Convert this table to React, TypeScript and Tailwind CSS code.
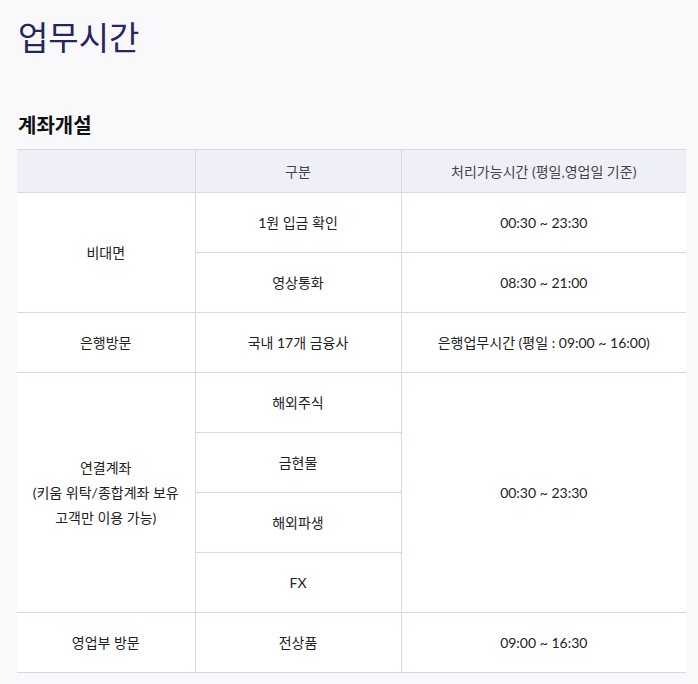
const rows = [
  { a: "비대면", b: "1원 입금 확인", c: "00:30 ~ 23:30", aSpan: 2 },
  { b: "영상통화", c: "08:30 ~ 21:00" },
  { a: "은행방문", b: "국내 17개 금융사", c: "은행업무시간 (평일 : 09:00 ~ 16:00)", aSpan: 1 },
  { a: "연결계좌\n(키움 위탁/종합계좌 보유\n고객만 이용 가능)", b: "해외주식", c: "00:30 ~ 23:30", aSpan: 4, cSpan: 4 },
  { b: "금현물" },
  { b: "해외파생" },
  { b: "FX" },
  { a: "영업부 방문", b: "전상품", c: "09:00 ~ 16:30", aSpan: 1 },
];

export default function App() {
  return (
    <div
      className="min-h-[684px] bg-[#f9f9fc] px-[17px] pt-[16px] pb-[12px] text-[#222]"
      style={{ fontFamily: "Lato, 'Noto Sans CJK KR', sans-serif" }}
    >
      <h1 className="text-[33px] leading-[42px] text-[#24265c] pl-[1px]">업무시간</h1>

      <h2 className="mt-[53px] text-[20px] leading-[28px] font-bold text-[#111] pl-[1px]">계좌개설</h2>

      <table className="mt-[10px] w-[669px] border-collapse table-fixed text-[14px] bg-white">
        <colgroup>
          <col className="w-[178px]" />
          <col className="w-[206px]" />
          <col />
        </colgroup>
        <thead>
          <tr className="h-[43px] bg-[#efeff8] text-[#444]">
            <th className="border-y border-[#d6d6ee] font-normal"></th>
            <th className="border border-[#d6d6ee] font-normal">구분</th>
            <th className="border-y border-[#d6d6ee] font-normal">처리가능시간 (평일,영업일 기준)</th>
          </tr>
        </thead>
        <tbody>
          {rows.map((r, i) => (
            <tr key={i} className="h-[60px]">
              {r.a && (
                <td
                  rowSpan={r.aSpan}
                  className="border-y border-r border-[#d6d6ee] text-center leading-[25px] whitespace-pre-line"
                >
                  {r.a}
                </td>
              )}
              <td className="border border-[#d6d6ee] text-center">{r.b}</td>
              {r.c && (
                <td rowSpan={r.cSpan ?? 1} className="border-y border-l border-[#d6d6ee] text-center">
                  {r.c}
                </td>
              )}
            </tr>
          ))}
        </tbody>
      </table>
    </div>
  );
}
